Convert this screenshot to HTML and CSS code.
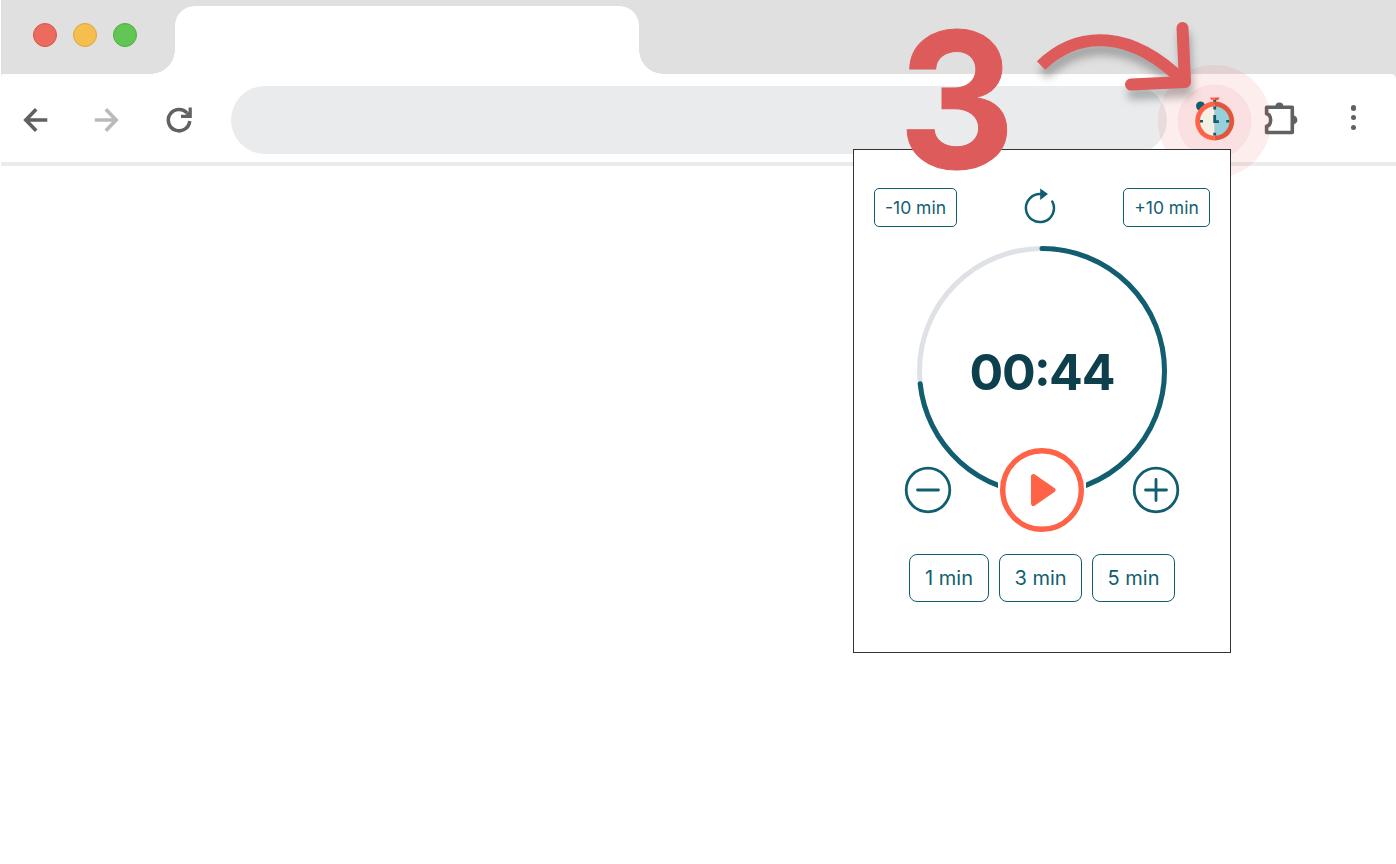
FILE: index.html
```html
<!DOCTYPE html>
<html lang="en">
<head>
<meta charset="utf-8">
<title>Timer extension</title>
<link rel="stylesheet" href="styles.css">
</head>
<body>
<div class="browser">
  <div class="tabstrip">
    <div class="lights"><i class="light red"></i><i class="light yellow"></i><i class="light green"></i></div>
    <div class="tab"></div>
  </div>
  <div class="toolbar">
    <svg class="nav" viewBox="0 0 28 28"><path d="M26.300 14H5M15.200 3.200L4.800 14L15.200 24.800" fill="none" stroke="#5f6163" stroke-width="3.600"/></svg>
    <svg class="nav" viewBox="0 0 28 28"><path d="M1.800 14H23M12.800 3.200L23.200 14L12.800 24.800" fill="none" stroke="#bababa" stroke-width="3.600"/></svg>
    <svg class="nav" viewBox="0 0 28 28"><path d="M24.700 15A10.700 10.700 0 1 1 22.200 7.200" fill="none" stroke="#5f6163" stroke-width="3.500"/><path d="M23.600 1.500H26.800V12H16V8.800H20.600L23.600 5.800Z" fill="#5f6163"/></svg>
    <div class="omnibox"></div>
    <div class="actions">
      <div class="pin">
        <div class="pulse"></div>
        <svg class="stopwatch" viewBox="0 0 40 44">
          <circle cx="5.500" cy="9" r="4.500" fill="#115e70"/>
          <path d="M18.200 3h3v4h-3z" fill="#115e70"/>
          <path d="M14.800 .5h4.900v2.600h-3.400z" fill="#ff6347"/><path d="M19.700 .5h4.900l-1.500 2.600h-3.400z" fill="#e2543c"/>
          <path d="M19.700 4.600a19.500 19.500 0 0 0 0 39z" fill="#ff6347"/>
          <path d="M19.700 4.600a19.500 19.500 0 0 1 0 39z" fill="#e2543c"/>
          <path d="M19.700 9.400a14.700 14.700 0 0 0 0 29.400z" fill="#f4f0e4"/>
          <path d="M19.700 9.400a14.700 14.700 0 0 1 0 29.400z" fill="#96d1db"/>
          <path d="M18.300 9.600h2.800v2.800h-2.800zM18.300 35.800h2.800v2.800h-2.800zM5 23h3v2.400H5zM31.200 23h3v2.400h-3zM18.300 17.900h2.800v5.400h2.800v2.800h-5.600z" fill="#115e70"/>
        </svg>
      </div>
      <svg class="puzzle" viewBox="0 0 36 36"><path d="M3.600 6.300H29.300V31.500H3.600V25.300C9 24 9 14.100 3.600 12.800Z" fill="none" stroke="#5f6163" stroke-width="3.600" stroke-linejoin="round"/><path d="M12.400 5.500a4 4 0 0 1 8 0zM30 14.500a4.400 4.400 0 0 1 0 8.800z" fill="#5f6163"/></svg>
      <div class="more"><i></i><i></i><i></i></div>
    </div>
  </div>
</div>

<div class="popup">
  <div class="top-row">
    <button class="adjust">-10 min</button>
    <svg class="reset" viewBox="0 0 32 36"><path d="M28.300 13.500A14 14 0 1 1 17 6.100" fill="none" stroke="#115e70" stroke-width="2.500" stroke-linecap="round"/><path d="M16.200 0.500L24 6L16.200 12Z" fill="#115e70"/></svg>
    <button class="adjust plus">+10 min</button>
  </div>
  <div class="dial">
    <svg class="ring" viewBox="0 0 250 250">
      <circle cx="125" cy="125" r="122.500" fill="none" stroke="#dee1e6" stroke-width="5"/>
      <circle cx="125" cy="125" r="122.500" fill="none" stroke="#115e70" stroke-width="5" stroke-linecap="round" pathLength="60" stroke-dasharray="44 60" transform="rotate(-90 125 125)"/>
    </svg>
    <div class="time">00<span class="colon">:</span>44</div>
  </div>
  <div class="controls">
    <svg class="step" viewBox="0 0 48 48"><circle cx="24" cy="24" r="21.800"/><path d="M13.500 24H34.500"/></svg>
    <svg class="play" viewBox="0 0 88 88"><circle cx="44" cy="44" r="39.300" fill="#fff" stroke="#ff6347" stroke-width="5.400"/><path d="M35.500 30.500L55 44L35.500 57.500Z" fill="#ff6347" stroke="#ff6347" stroke-width="5" stroke-linejoin="round"/></svg>
    <svg class="step" viewBox="0 0 48 48"><circle cx="24" cy="24" r="21.800"/><path d="M13.500 24H34.500M24 13.500V34.500"/></svg>
  </div>
  <div class="presets">
    <button class="preset one">1 min</button>
    <button class="preset">3 min</button>
    <button class="preset">5 min</button>
  </div>
</div>

<div class="callout-number">3</div>
<svg class="callout-arrow" viewBox="1025 10 180 110">
  <g fill="none" stroke="#dd5b5b" stroke-width="12">
    <path d="M1041 65.500C1079 29 1132 30 1184 82"/>
    <path d="M1182.500 28L1185 82L1131 84.500" stroke-linecap="round" stroke-linejoin="round"/>
  </g>
</svg>
</body>
</html>
```

FILE: styles.css
```css
* { box-sizing: border-box; }
body { margin: 0; width: 1396px; height: 864px; overflow: hidden; position: relative; background: #fff; font-family: Inter, "Liberation Sans", sans-serif; }
svg { display: block; flex: none; }
button { font-family: inherit; background: #fff; padding: 0; color: #115e70; }

.browser { padding-left: 1px; background: linear-gradient(90deg, #fff 1px, #e0e0e0 1px); }
.tabstrip { height: 74px; display: flex; background: #e0e0e0; padding: 6px 0 0 32px; }
.lights { display: flex; gap: 16px; width: 142px; padding-top: 17px; }
.light { width: 24px; height: 24px; border-radius: 50%; border: 1px solid; }
.red { background: #ed6a5e; border-color: #d8544a; }
.yellow { background: #f5bf4f; border-color: #dba63c; }
.green { background: #61c654; border-color: #4caf40; }
.tab { position: relative; width: 464px; background: #fff; border-radius: 20px 20px 0 0; }
.tab::before, .tab::after { content: ""; position: absolute; bottom: 0; width: 24px; height: 24px; }
.tab::before { left: -24px; background: radial-gradient(circle at 0 0, transparent 23.500px, #fff 24px); }
.tab::after { right: -24px; background: radial-gradient(circle at 100% 0, transparent 23.500px, #fff 24px); }

.toolbar { height: 92px; display: flex; align-items: center; border-bottom: 4px solid #ebebeb; padding: 4px 40px 0 20px; background: #fff; border-radius: 3px 5px 0 0; }
.nav { width: 28px; height: 28px; margin-right: 44px; }
.omnibox { width: 936px; height: 68px; margin-left: -6px; border-radius: 34px; background: #e9ebec; flex: none; }
.actions { display: flex; align-items: center; flex: 1; margin-left: 28px; }
.pin { position: relative; width: 40px; height: 44px; margin-top: -3px; }
.pulse { position: absolute; left: -37px; top: -32px; width: 113px; height: 113px; border-radius: 50%; background: radial-gradient(circle, rgba(221,60,60,.16) 36.500px, rgba(235,70,70,.095) 37.500px); }
.stopwatch { position: relative; width: 40px; height: 44px; }
.puzzle { width: 36px; height: 36px; margin-left: 28px; margin-top: -3px; }
.more { margin-left: auto; margin-top: -5px; display: grid; gap: 4.250px; }
.more i { width: 5.500px; height: 5.500px; border-radius: 50%; background: #5f6163; }

.popup { position: absolute; left: 853px; top: 149px; width: 378px; height: 504px; border: 1px solid #333; background: #fff; padding: 38px 20px 0; }
.top-row { display: flex; justify-content: space-between; height: 40px; align-items: center; }
.adjust { width: 83px; height: 39px; border: 1.300px solid #115e70; border-radius: 5px; font-size: 17.500px; margin-top: -1px; }
.adjust.plus { width: 87px; }
.reset { width: 32px; height: 36px; margin-left: 0; margin-top: -5px; }
.dial { display: grid; place-items: center; margin-top: 17.500px; height: 250px; }
.ring, .time { grid-area: 1 / 1; }
.ring { width: 250px; height: 250px; }
.time { font-size: 50px; line-height: 60px; font-weight: 700; letter-spacing: -1.100px; color: #0d3f4c; padding-top: 2px; display: flex; }
.colon { margin: -4px -.500px 4px -.800px; }
.controls { position: relative; display: flex; align-items: center; justify-content: space-between; margin-top: -49.500px; height: 88px; padding: 0 30px; }
.step { width: 48px; height: 48px; fill: none; stroke: #115e70; stroke-width: 2.800px; stroke-linecap: round; }
.play { width: 88px; height: 88px; background: #fff; }
.presets { display: flex; justify-content: center; gap: 10px; margin-top: 20px; }
.preset { width: 83px; height: 48px; border: 1.300px solid #115e70; border-radius: 8px; font-size: 20px; }
.preset.one { width: 80px; }

.callout-number { position: absolute; left: 896px; top: 20px; width: 120px; text-align: center; font: 700 188px/160px Inter, "Liberation Sans", sans-serif; color: #dd5b5b; -webkit-text-stroke: 1px #dd5b5b; transform: scaleX(.96); }
.callout-arrow { position: absolute; left: 1025px; top: 10px; width: 180px; height: 110px; overflow: visible; filter: drop-shadow(2px 9px 4px rgba(0,0,0,.28)); }
```
